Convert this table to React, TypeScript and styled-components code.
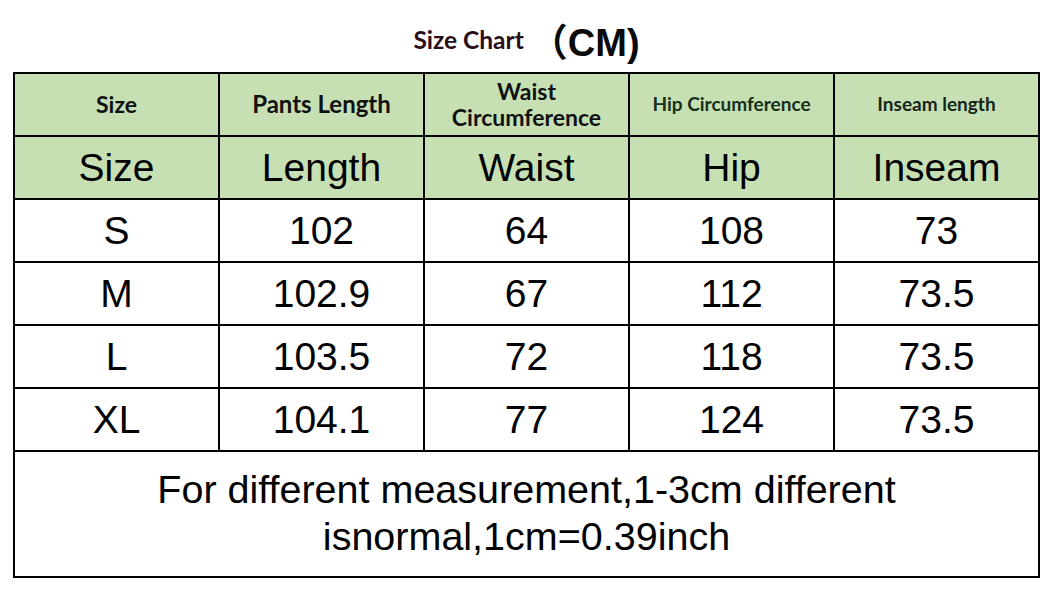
import React from 'react'
import styled, { createGlobalStyle } from 'styled-components'

const GlobalStyle = createGlobalStyle`
  body {
    margin: 0;
    background: #ffffff;
  }
`

type HeadCell = { label: React.ReactNode; size: number; color?: string }

const headLabels: HeadCell[] = [
  { label: 'Size', size: 23 },
  { label: 'Pants Length', size: 24 },
  { label: <>Waist<br />Circumference</>, size: 23 },
  { label: 'Hip Circumference', size: 19, color: '#16301a' },
  { label: 'Inseam length', size: 19, color: '#14261a' },
]

const shortLabels = ['Size', 'Length', 'Waist', 'Hip', 'Inseam']

const rows = [
  ['S', '102', '64', '108', '73'],
  ['M', '102.9', '67', '112', '73.5'],
  ['L', '103.5', '72', '118', '73.5'],
  ['XL', '104.1', '77', '124', '73.5'],
]

function App(): JSX.Element {
  return (
    <Page>
      <GlobalStyle />
      <TitleBar>
        <TitleText>Size Chart</TitleText>
        <Unit>（CM)</Unit>
      </TitleBar>
      <Chart>
        <colgroup>
          {shortLabels.map((l) => (
            <col key={l} style={{ width: 205 }} />
          ))}
        </colgroup>
        <thead>
          <Row>
            {headLabels.map((h, i) => (
              <HeadCellBox key={i} $size={h.size} $color={h.color}>
                {h.label}
              </HeadCellBox>
            ))}
          </Row>
          <Row>
            {shortLabels.map((l) => (
              <SubHeadCell key={l}>{l}</SubHeadCell>
            ))}
          </Row>
        </thead>
        <tbody>
          {rows.map((r) => (
            <Row key={r[0]}>
              {r.map((v, i) => (
                <Cell key={i}>{v}</Cell>
              ))}
            </Row>
          ))}
          <NoteRow>
            <NoteCell colSpan={5}>
              For different measurement,1-3cm different
              <br />
              isnormal,1cm=0.39inch
            </NoteCell>
          </NoteRow>
        </tbody>
      </Chart>
    </Page>
  )
}

const Page = styled.div`
  width: 1053px;
  height: 600px;
  overflow: hidden;
`

const TitleBar = styled.div`
  height: 72px;
  display: flex;
  align-items: center;
  justify-content: center;
  box-sizing: border-box;
  padding-top: 6px;
`

const TitleText = styled.span`
  font-family: Lato, 'Liberation Sans', sans-serif;
  font-weight: 700;
  font-size: 24.5px;
  color: #2a0e18;
  margin-right: 6px;
`

const Unit = styled.span`
  font-family: 'Liberation Sans', 'Noto Sans CJK SC', sans-serif;
  font-weight: 700;
  font-size: 38px;
  color: #0a0a0a;
`

const Chart = styled.table`
  margin-left: 13px;
  width: 1027px;
  table-layout: fixed;
  border-collapse: collapse;
  font-family: 'Liberation Sans', Arial, sans-serif;
  color: #000;
`

const Row = styled.tr`
  height: 63px;
`

const NoteRow = styled.tr`
  height: 126px;
`

const BaseCell = styled.td`
  border: 2px solid #000;
  text-align: center;
  vertical-align: middle;
  padding: 0;
`

const HeadCellBox = styled(BaseCell).attrs({ as: 'th' })<{ $size: number; $color?: string }>`
  background: #c6e0b4;
  font-family: Lato, 'Liberation Sans', sans-serif;
  font-weight: 700;
  font-size: ${(p) => p.$size}px;
  line-height: 1.1;
  color: ${(p) => p.$color || '#111'};
`

const SubHeadCell = styled(BaseCell).attrs({ as: 'th' })`
  background: #c6e0b4;
  font-weight: 400;
  font-size: 39px;
`

const Cell = styled(BaseCell)`
  font-size: 39px;
`

const NoteCell = styled(BaseCell)`
  font-size: 39.5px;
  line-height: 47px;
  padding-bottom: 2px;
`

export default App
